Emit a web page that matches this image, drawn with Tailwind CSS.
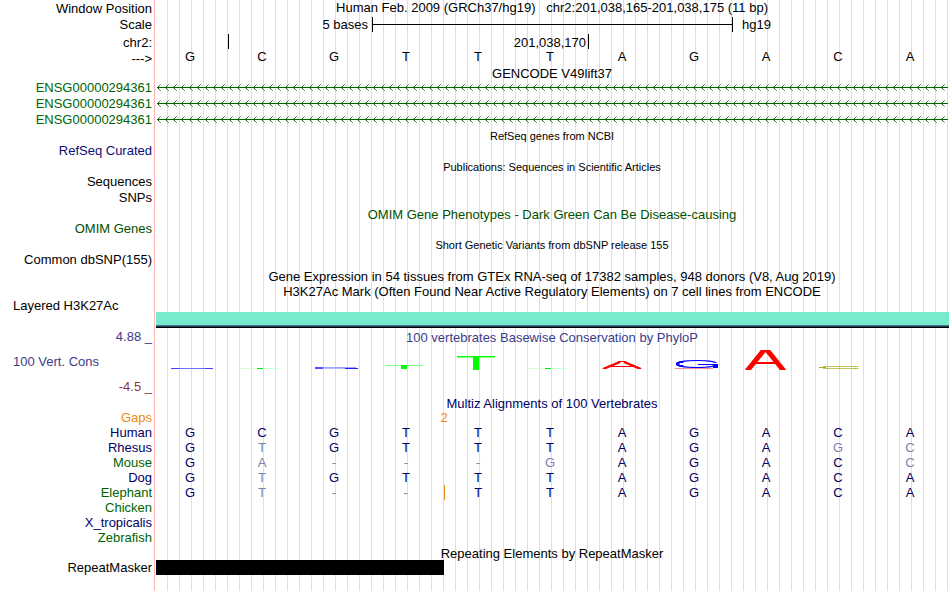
<!DOCTYPE html>
<html lang="en">
<head>
  <meta charset="UTF-8" />
  <meta name="viewport" content="width=device-width, initial-scale=1" />
  <title>Genome Browser - chr2:201,038,165-201,038,175</title>

  <!-- Tailwind CSS CDN -->
  <script src="https://cdn.jsdelivr.net/npm/@tailwindcss/browser@4"></script>
</head>
<body class="bg-white font-['Liberation_Sans',Arial,sans-serif] text-[13px] leading-[15px] text-black">

  <!-- Guide lines every 12px, left gutter kept white with the red divider -->
  <main class="min-h-screen pr-0.5 bg-[linear-gradient(to_right,#fff_154px,#ffb4b4_154px,#ffb4b4_155px,#fff_155px,#fff_156px,transparent_156px),repeating-linear-gradient(to_right,transparent_0px,transparent_11px,#dcdcf8_11px,#dcdcf8_12px)]">

    <!-- Position and ruler -->
    <header>
      <div class="flex h-[17px]">
        <div class="w-[156px] shrink-0 pr-1 pt-px text-right">Window Position</div>
        <h1 class="flex-1 text-center whitespace-pre">Human Feb. 2009 (GRCh37/hg19)   chr2:201,038,165-201,038,175 (11 bp)</h1>
      </div>
      <div class="flex h-[17px]">
        <div class="w-[156px] shrink-0 pr-1 text-right">Scale</div>
        <div class="grid flex-1 grid-cols-11">
          <div class="col-span-3 pr-1 text-right">5 bases</div>
          <div class="col-span-5 -mr-px flex h-[15px] items-center border-x border-black">
            <div class="h-px w-full bg-black"></div>
          </div>
          <div class="pl-2.5">hg19</div>
        </div>
      </div>
      <div class="flex h-[17px]">
        <div class="w-[156px] shrink-0 pr-1 pt-px text-right">chr2:</div>
        <div class="grid flex-1 grid-cols-11">
          <div></div>
          <div class="col-span-5 h-[15px] border-l border-black pt-px pr-0.5 text-right">201,038,170</div>
          <div class="col-span-5 h-[15px] border-l border-black"></div>
        </div>
      </div>
      <div class="flex h-[14px]">
        <div class="w-[156px] shrink-0 pr-1 text-right">---&gt;</div>
        <div class="-mt-0.5 grid flex-1 grid-cols-11 text-center *:pr-1">
          <span>G</span><span>C</span><span>G</span><span>T</span><span>T</span><span>T</span><span>A</span><span>G</span><span>A</span><span>C</span><span>A</span>
        </div>
      </div>
    </header>

    <!-- GENCODE -->
    <section>
      <svg class="absolute size-0" aria-hidden="true">
        <defs>
          <pattern id="strand" x="1" y="0" width="8" height="16" patternUnits="userSpaceOnUse">
            <g fill="#006400">
              <rect x="0" y="8" width="8" height="1" />
              <rect x="1" y="7" width="1" height="1" />
              <rect x="1" y="9" width="1" height="1" />
              <rect x="2" y="6" width="1" height="1" opacity=".8" />
              <rect x="2" y="10" width="1" height="1" opacity=".8" />
              <rect x="3" y="5" width="1" height="1" opacity=".5" />
              <rect x="3" y="11" width="1" height="1" opacity=".5" />
            </g>
          </pattern>
        </defs>
      </svg>
      <h2 class="h-[14px] pt-px pl-[156px] text-center">GENCODE V49lift37</h2>
      <div class="flex h-4 text-[#006400]">
        <div class="w-[156px] shrink-0 pr-1 pt-px text-right">ENSG00000294361</div>
        <svg class="h-4 flex-1"><rect x="1" width="100%" height="16" fill="url(#strand)" /></svg>
      </div>
      <div class="flex h-4 text-[#006400]">
        <div class="w-[156px] shrink-0 pr-1 pt-px text-right">ENSG00000294361</div>
        <svg class="h-4 flex-1"><rect x="1" width="100%" height="16" fill="url(#strand)" /></svg>
      </div>
      <div class="flex h-4 text-[#006400]">
        <div class="w-[156px] shrink-0 pr-1 pt-px text-right">ENSG00000294361</div>
        <svg class="h-4 flex-1"><rect x="1" width="100%" height="16" fill="url(#strand)" /></svg>
      </div>
    </section>

    <!-- Dense tracks -->
    <section>
      <h2 class="h-4 pt-0.5 pl-[156px] text-center text-[11px]">RefSeq genes from NCBI</h2>
      <div class="h-[15px] w-[152px] text-right text-[#0c0c78]">RefSeq Curated</div>
    </section>
    <section>
      <h2 class="h-4 pt-0.5 pl-[156px] text-center text-[11px]">Publications: Sequences in Scientific Articles</h2>
      <div class="h-4 w-[152px] text-right">Sequences</div>
      <div class="h-4 w-[152px] text-right">SNPs</div>
    </section>
    <section class="text-[#005000]">
      <h2 class="h-[15px] pt-px pl-[156px] text-center">OMIM Gene Phenotypes - Dark Green Can Be Disease-causing</h2>
      <div class="h-4 w-[152px] text-right">OMIM Genes</div>
    </section>
    <section>
      <h2 class="h-[15px] pt-px pl-[156px] text-center text-[11px]">Short Genetic Variants from dbSNP release 155</h2>
      <div class="h-4 w-[152px] text-right">Common dbSNP(155)</div>
    </section>
    <h2 class="h-4 pt-px pl-[156px] text-center">Gene Expression in 54 tissues from GTEx RNA-seq of 17382 samples, 948 donors (V8, Aug 2019)</h2>

    <!-- H3K27Ac -->
    <section>
      <h2 class="h-[14px] pl-[156px] text-center">H3K27Ac Mark (Often Found Near Active Regulatory Elements) on 7 cell lines from ENCODE</h2>
      <div class="-mr-px flex h-[30px] items-end">
        <div class="w-[156px] shrink-0 self-start pl-[13px]">Layered H3K27Ac</div>
        <div class="h-4 flex-1 border-b border-black bg-[linear-gradient(#78ebcd_13px,#3c7896_13px,#3c7896_14px,#1e3c50_14px)]"></div>
      </div>
    </section>

    <!-- PhyloP conservation -->
    <section class="text-[#3c3c8c]">
      <div class="flex h-[17px]">
        <div class="w-[156px] shrink-0 pr-1 pt-px text-right">4.88 _</div>
        <h2 class="flex-1 pt-0.5 text-center">100 vertebrates Basewise Conservation by PhyloP</h2>
      </div>
      <div class="flex h-[33px] items-center">
        <div class="w-[156px] shrink-0 pl-[13px]">100 Vert. Cons</div>
        <svg class="h-[33px] flex-1" viewBox="0 0 792 33" preserveAspectRatio="none" role="img" aria-label="Conservation score per base">
          <!-- bases 1-3 -->
          <rect x="15" y="23" width="42" height="1" fill="#7070ff" />
          <rect x="15" y="23" width="8" height="1" fill="#4040ff" />
          <rect x="49" y="23" width="8" height="1" fill="#4040ff" />
          <rect x="85" y="23" width="38" height="1" fill="#d0ffd0" />
          <rect x="101" y="23" width="6" height="1" fill="#00f000" />
          <rect x="160" y="22" width="40" height="1" fill="#a0a0ff" />
          <rect x="160" y="23" width="38" height="1" fill="#b8b8ff" />
          <rect x="159" y="22" width="8" height="2" fill="#5050ff" />
          <rect x="189" y="23" width="13" height="1" fill="#2020ff" />
          <!-- bases 4-6 -->
          <rect x="229" y="20" width="38" height="1" fill="#80ff80" />
          <rect x="245" y="20" width="6" height="4" fill="#00ff00" />
          <rect x="301" y="11" width="38" height="1" fill="#00ff00" />
          <rect x="301" y="12" width="38" height="1" fill="#90ff90" />
          <rect x="317" y="11" width="6" height="14" fill="#00ff00" />
          <rect x="373" y="23" width="38" height="1" fill="#d0ffd0" />
          <rect x="389" y="23" width="6" height="1" fill="#00f000" />
          <!-- base 7 -->
          <svg x="446" y="16" width="40" height="8" viewBox="0 0 40 8" preserveAspectRatio="none" stroke="#ff0000">
            <line x1="1" y1="8" x2="18" y2="1" stroke-width="2.4" />
            <line x1="22" y1="1" x2="39" y2="8" stroke-width="2.4" />
            <line x1="9" y1="5.5" x2="31" y2="5.5" stroke-width="1" />
            <line x1="16" y1=".5" x2="24" y2=".5" stroke-width="1" />
          </svg>
          <!-- base 8 -->
          <rect x="519" y="23" width="38" height="1" fill="#ff9090" />
          <g stroke="#0000ff" fill="none">
            <ellipse cx="541" cy="19" rx="20" ry="3.5" stroke-width="1.2" />
            <ellipse cx="524" cy="19" rx="3" ry="1.4" stroke-width="2" />
          </g>
          <rect x="524" y="18" width="6" height="2" fill="#ffffff" />
          <rect x="551" y="18" width="12" height="1" fill="#ffffff" />
          <rect x="542" y="19" width="20" height="1" fill="#0000ff" />
          <rect x="557" y="19" width="5" height="4" fill="#0000ff" />
          <!-- base 9 -->
          <svg x="589" y="5" width="41" height="20" viewBox="0 0 41 20" preserveAspectRatio="none" stroke="#ff0000">
            <line x1="2" y1="21" x2="19" y2="0" stroke-width="5" />
            <line x1="22" y1="0" x2="39" y2="21" stroke-width="5" />
            <line x1="10" y1="13" x2="31" y2="13" stroke-width="2" />
            <line x1="17" y1="1" x2="24" y2="1" stroke-width="2" />
          </svg>
          <!-- base 10 -->
          <g fill="#aaaa20">
            <rect x="667" y="21" width="34" height="1" opacity=".7" />
            <rect x="663" y="22" width="7" height="1" />
            <rect x="667" y="23" width="34" height="1" opacity=".7" />
            <rect x="698" y="21" width="5" height="1" opacity=".5" />
            <rect x="698" y="23" width="5" height="1" opacity=".5" />
          </g>
        </svg>
      </div>
      <div class="h-[17px] w-[152px] pt-px text-right text-[#8c3c3c]">-4.5 _</div>
    </section>

    <!-- Multiz alignment -->
    <section class="text-[#000064]">
      <h2 class="h-[15px] pt-px pl-[156px] text-center">Multiz Alignments of 100 Vertebrates</h2>
      <table class="w-full table-fixed text-center">
        <colgroup>
          <col class="w-[156px]" />
          <col span="11" />
        </colgroup>
        <tbody id="alignment">
          <tr class="h-[15px] text-[#e68c14]">
            <th scope="row" class="p-0 pr-1 text-right font-normal">Gaps</th>
            <td colspan="8" class="p-0">2</td>
            <td colspan="3" class="p-0"></td>
          </tr>
        </tbody>
      </table>
    </section>

    <!-- RepeatMasker -->
    <section>
      <h2 class="h-[15px] pt-px pl-[156px] text-center">Repeating Elements by RepeatMasker</h2>
      <div class="flex h-[15px]">
        <div class="w-[156px] shrink-0 pr-1 text-right">RepeatMasker</div>
        <div class="grid flex-1 grid-cols-11">
          <div class="col-span-4 bg-black"></div>
        </div>
      </div>
    </section>
  </main>

  <script>
    const human = 'GCGTTTAGACA';
    const species = [
      { name: 'Human', bases: human, color: 'text-[#000064]' },
      { name: 'Rhesus', bases: 'GTGTTTAGAGC', color: 'text-[#000064]' },
      { name: 'Mouse', bases: 'GA---GAGACC', color: 'text-[#006400]' },
      { name: 'Dog', bases: 'GTGTTTAGACA', color: 'text-[#000064]' },
      { name: 'Elephant', bases: 'GT--TTAGACA', color: 'text-[#006400]', insertAt: 4 },
      { name: 'Chicken', bases: '', color: 'text-[#006400]' },
      { name: 'X_tropicalis', bases: '', color: 'text-[#000064]' },
      { name: 'Zebrafish', bases: '', color: 'text-[#006400]' }
    ];

    const tbody = document.getElementById('alignment');

    species.forEach((s) => {
      const tr = document.createElement('tr');
      tr.className = 'h-[15px]';

      const th = document.createElement('th');
      th.scope = 'row';
      th.className = 'p-0 pr-1 text-right font-normal ' + s.color;
      th.textContent = s.name;
      tr.appendChild(th);

      for (let i = 0; i < human.length; i++) {
        const td = document.createElement('td');
        const base = s.bases[i] || '';
        td.className = 'p-0 pr-1';
        // bases that differ from human are dimmed
        if (base !== human[i]) td.className += ' text-[#8080b4]';
        if (s.insertAt === i) td.className += ' border-l border-[#e68c14]';
        td.textContent = base;
        tr.appendChild(td);
      }

      tbody.appendChild(tr);
    });
  </script>

</body>
</html>
